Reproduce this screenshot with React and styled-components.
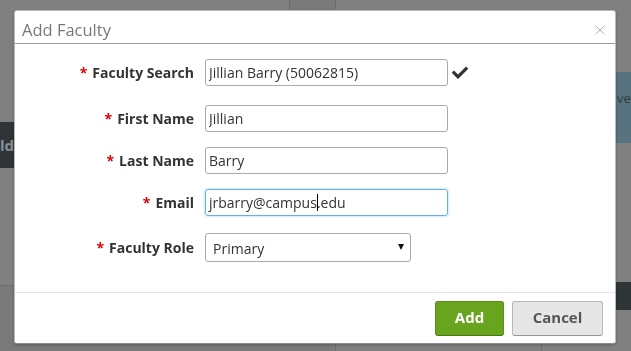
import React from "react";
import styled, { createGlobalStyle } from "styled-components";

const Global = createGlobalStyle`
  html, body { margin: 0; padding: 0; }
  body {
    background: #808080;
    font-family: "Open Sans", "Liberation Sans", sans-serif;
    overflow: hidden;
  }
  * { box-sizing: border-box; }
`;

/* ---------- dimmed page behind the dialog ---------- */
const Page = styled.div`
  display: grid;
  grid-template-columns: 336px 1fr;
  width: 631px;
  height: 351px;
  background: #808080;
`;

const Column = styled.div`
  display: flex;
  flex-direction: column;
  border-right: ${(p) => (p.$divider ? "1px solid #6e6e6e" : "none")};
`;

const TopStrip = styled.div`
  display: grid;
  grid-template-columns: 289px 1fr;
  height: 72px;
`;

const TopCell = styled.div`
  background: ${(p) => p.$bg || "#808080"};
  border-left: ${(p) => (p.$line ? "1px solid #6c6c6c" : "none")};
`;

const Spacer = styled.div`
  height: ${(p) => p.$h}px;
  flex: ${(p) => (p.$grow ? 1 : "none")};
  background: ${(p) => p.$bg || "#808080"};
  border-top: ${(p) => (p.$line ? "1px solid #6e6e6e" : "none")};
`;

const DarkBand = styled.div`
  height: ${(p) => p.$h}px;
  background: #2f3437;
  color: #8a9196;
  font-weight: 700;
  font-size: 15px;
  line-height: ${(p) => p.$h}px;
  padding-left: 0;
`;

const TealBand = styled.div`
  height: 71px;
  background: #57737f;
  color: #2c3c43;
  font-size: 13px;
  padding: 17px 0 0 281px;
  line-height: 18px;
  white-space: nowrap;
`;

const BottomRow = styled.div`
  display: flex;
  flex: 1;
`;

const BottomCell = styled.div`
  width: ${(p) => p.$w}px;
  flex: ${(p) => (p.$w ? "none" : 1)};
  border-right: ${(p) => (p.$line ? "1px solid #6e6e6e" : "none")};
`;

/* ---------- dialog ---------- */
const Overlay = styled.div`
  position: fixed;
  inset: 0;
  padding: 10px 0 0 14px;
`;

const Modal = styled.div`
  width: 602px;
  height: 334px;
  background: #fff;
  border: 1px solid #b9b9b9;
  border-bottom-color: #8c8c8c;
  border-radius: 3px;
  box-shadow: 0 1px 3px rgba(0, 0, 0, 0.25);
  display: flex;
  flex-direction: column;
`;

const Header = styled.div`
  height: 33px;
  flex: none;
  display: flex;
  align-items: center;
  justify-content: space-between;
  padding: 6px 10px 0 7px;
  border-bottom: 1px solid #999;
`;

const Title = styled.h4`
  margin: 0;
  font-size: 16.5px;
  font-weight: 400;
  color: #777;
  line-height: 22px;
`;

const CloseButton = styled.button`
  border: 0;
  background: none;
  padding: 0;
  width: 11px;
  height: 11px;
  display: flex;
  align-items: center;
  justify-content: center;
  cursor: pointer;
`;

const Body = styled.form`
  flex: 1;
  padding-top: 15px;
  display: flex;
  flex-direction: column;
`;

const Row = styled.div`
  display: grid;
  grid-template-columns: 179px auto;
  column-gap: 11px;
  align-items: center;
  margin-bottom: ${(p) => p.$mb || 0}px;
`;

const Label = styled.label`
  text-align: right;
  font-size: 14px;
  font-weight: 700;
  color: #333;
  white-space: nowrap;
`;

const Req = styled.span`
  color: #e00000;
  margin-right: 5px;
`;

const FieldWrap = styled.div`
  display: flex;
  align-items: center;
  gap: 4px;
`;

const Input = styled.input`
  width: 243px;
  height: 27px;
  border: 1px solid #aaa;
  border-radius: 3px;
  padding: 0 3px;
  font-family: inherit;
  font-size: 14px;
  color: #333;
  background: #fff;
  outline: none;
`;

const FocusedBox = styled.div`
  width: 243px;
  height: 27px;
  border: 1px solid #66afe9;
  border-radius: 3px;
  padding: 0 3px;
  font-size: 14px;
  line-height: 25px;
  color: #333;
  box-shadow: 0 0 3px rgba(102, 175, 233, 0.6);
  white-space: nowrap;
`;

const Caret = styled.span`
  display: inline-block;
  width: 1px;
  height: 17px;
  background: #000;
  vertical-align: -3px;
  margin: 0 -1px 0 0;
`;

const SelectWrap = styled.div`
  position: relative;
  width: 206px;
  &::after {
    content: "";
    position: absolute;
    right: 7px;
    top: 11px;
    border-left: 3.5px solid transparent;
    border-right: 3.5px solid transparent;
    border-top: 6px solid #111;
    pointer-events: none;
  }
`;

const Select = styled.select`
  appearance: none;
  width: 206px;
  height: 29px;
  border: 1px solid #aaa;
  border-radius: 3px;
  padding: 2px 7px 0;
  font-family: inherit;
  font-size: 14px;
  color: #333;
  background: #fff;
  outline: none;
`;

const Footer = styled.div`
  height: 51px;
  flex: none;
  border-top: 1px solid #e5e5e5;
  display: flex;
  justify-content: flex-end;
  align-items: flex-start;
  gap: 8px;
  padding: 8px 12px 0 0;
`;

const Button = styled.button`
  height: 35px;
  width: ${(p) => p.$w}px;
  border-radius: 3px;
  font-family: inherit;
  font-size: 15px;
  font-weight: 700;
  line-height: 31px;
  cursor: pointer;
  padding: 0 0 2px;
  background: ${(p) => (p.$primary ? "#68a41e" : "#e6e6e6")};
  color: ${(p) => (p.$primary ? "#fff" : "#555")};
  border: 1px solid ${(p) => (p.$primary ? "#5a8f18" : "#b8b8b8")};
  border-bottom-color: ${(p) => (p.$primary ? "#4a7812" : "#999")};
`;

const CheckIcon = () => (
  <svg width="16" height="13" viewBox="0 0 512 400" aria-hidden="true">
    <path
      fill="#333"
      d="M173.9 391.4l-166.4-166.4c-10-10-10-26.2 0-36.2l36.2-36.2c10-10 26.2-10 36.2 0L192 264.7 432.1 24.6c10-10 26.2-10 36.2 0l36.2 36.2c10 10 10 26.2 0 36.2l-294.4 294.4c-10 10-26.2 10-36.2 0z"
    />
  </svg>
);

const CloseIcon = () => (
  <svg width="10" height="10" viewBox="0 0 10 10" aria-hidden="true">
    <path d="M0.5 0.5L9.5 9.5M9.5 0.5L0.5 9.5" stroke="#b0b0b0" strokeWidth="1" />
  </svg>
);

export default function App() {
  return (
    <>
      <Global />
      <Page>
        <Column $divider>
          <TopStrip>
            <TopCell />
            <TopCell $bg="#7a7a7a" $line />
          </TopStrip>
          <Spacer $h={50} />
          <DarkBand $h={46}>ld</DarkBand>
          <Spacer $h={117} />
          <Spacer $grow $bg="#7a7a7a" $line />
        </Column>
        <Column>
          <Spacer $h={72} />
          <TealBand>ve</TealBand>
          <Spacer $h={139} />
          <DarkBand $h={28} />
          <BottomRow>
            <BottomCell $w={206} $line />
            <BottomCell />
          </BottomRow>
        </Column>
      </Page>

      <Overlay>
        <Modal role="dialog" aria-label="Add Faculty">
          <Header>
            <Title>Add Faculty</Title>
            <CloseButton type="button" aria-label="Close">
              <CloseIcon />
            </CloseButton>
          </Header>
          <Body onSubmit={(e) => e.preventDefault()}>
            <Row $mb={19}>
              <Label>
                <Req>*</Req>Faculty Search
              </Label>
              <FieldWrap>
                <Input defaultValue="Jillian Barry (50062815)" />
                <CheckIcon />
              </FieldWrap>
            </Row>
            <Row $mb={15}>
              <Label>
                <Req>*</Req>First Name
              </Label>
              <Input defaultValue="Jillian" />
            </Row>
            <Row $mb={15}>
              <Label>
                <Req>*</Req>Last Name
              </Label>
              <Input defaultValue="Barry" />
            </Row>
            <Row $mb={17}>
              <Label>
                <Req>*</Req>Email
              </Label>
              <FocusedBox role="textbox">
                jrbarry@campus
                <Caret />
                .edu
              </FocusedBox>
            </Row>
            <Row>
              <Label>
                <Req>*</Req>Faculty Role
              </Label>
              <SelectWrap>
                <Select defaultValue="Primary">
                  <option>Primary</option>
                  <option>Secondary</option>
                </Select>
              </SelectWrap>
            </Row>
          </Body>
          <Footer>
            <Button $primary $w={69} type="button">
              Add
            </Button>
            <Button $w={91} type="button">
              Cancel
            </Button>
          </Footer>
        </Modal>
      </Overlay>
    </>
  );
}
